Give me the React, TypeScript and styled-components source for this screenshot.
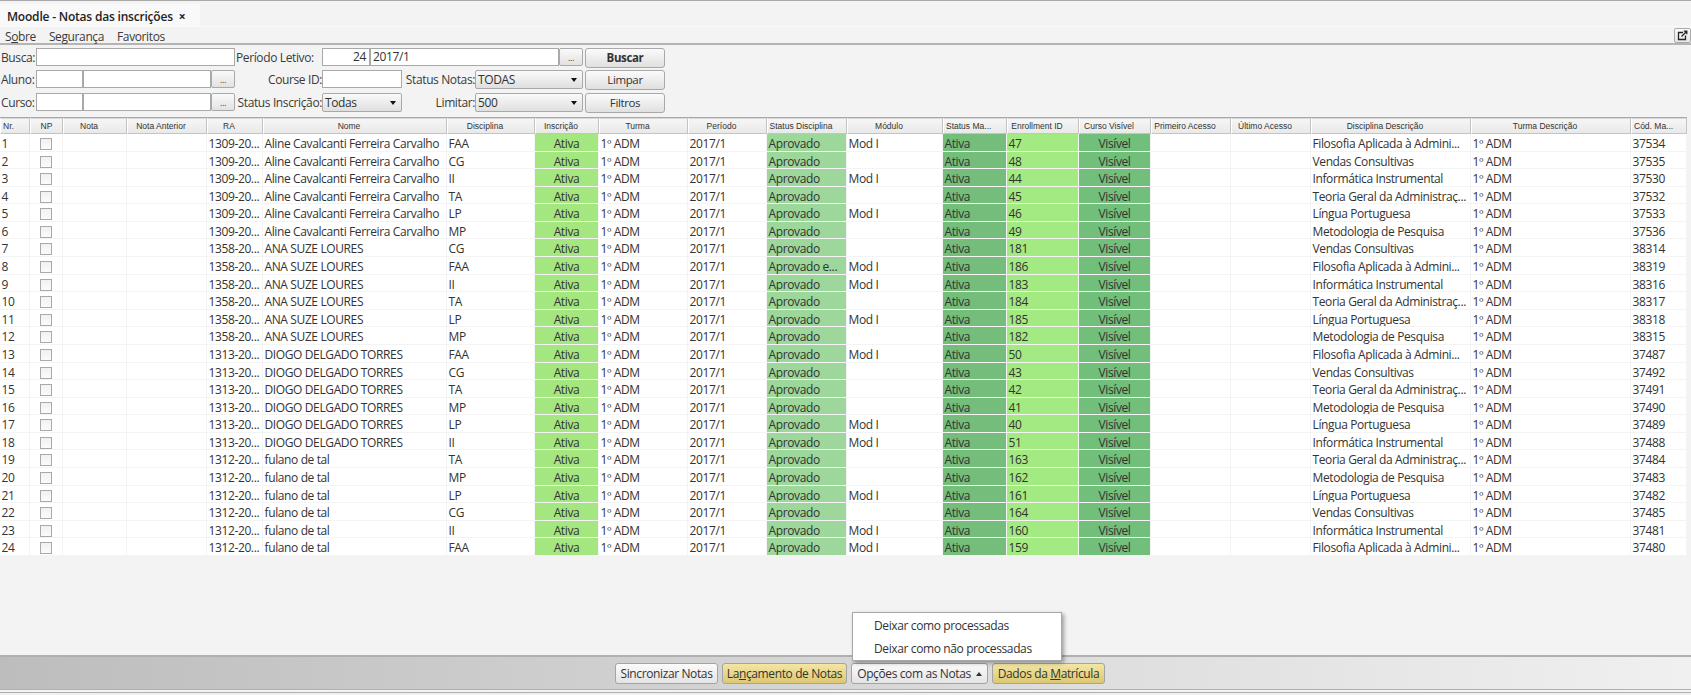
import React from "react";
import styled, { createGlobalStyle } from "styled-components";

const Global = createGlobalStyle`
  html, body { margin: 0; padding: 0; background: #f3f3f3; }
  body { font-family: "Open Sans", "Liberation Sans", sans-serif; color: #333; letter-spacing: -0.38px; }
`;

const COLS = "30px 33px 64px 80px 56px 184px 88px 64px 89px 79px 80px 96px 64px 72px 72px 80px 80px 160px 160px 56px";

const Page = styled.div`
  position: relative;
  width: 1691px;
  height: 695px;
  overflow: hidden;
  display: flex;
  flex-direction: column;
  background: #f3f3f3;
  border-top: 1px solid #a8a8a8;
  box-sizing: border-box;
  font-size: 12px;
`;
const TabBar = styled.div`
  height: 22px;
  padding-top: 3px;
  box-sizing: content-box;
  display: flex;
  border-bottom: 1px solid #fafafa;
`;
const Tab = styled.div`
  width: 200px;
  display: flex;
  align-items: center;
  padding: 3px 0 0 7px;
  box-sizing: border-box;
  background: #f9f9f9;
  font-weight: 600;
  font-size: 12px;
  letter-spacing: -0.2px;
  color: #222;
`;
const TabClose = styled.span`
  margin-left: 6px;
  font-size: 12px;
  font-weight: 700;
`;
const MenuBar = styled.div`
  height: 16px;
  display: flex;
  align-items: flex-start;
  justify-content: space-between;
  border-bottom: 2px solid #b4b4b4;
`;
const MenuItems = styled.div`
  display: flex;
  gap: 13px;
  padding: 1px 0 0 5px;
`;
const MenuItem = styled.span`
  font-size: 12px;
  color: #3a3a3a;
`;
const IconButton = styled.div`
  width: 17px;
  height: 15px;
  margin-top: 1px;
  display: flex;
  align-items: center;
  justify-content: center;
  box-sizing: border-box;
  border: 1px solid #aaa;
  border-radius: 2px;
  background: linear-gradient(#fbfbfb, #e6e6e6);
`;
const Form = styled.div`
  height: 72px;
  box-sizing: border-box;
  padding-top: 3px;
  display: grid;
  grid-template-columns: 36px 47px 128px 24px 87px 48px 32px 73px 84px 24px 2px 80px;
  grid-template-rows: 20px 21px 19px;
  row-gap: 2px;
  align-items: start;
`;
const FieldLabel = styled.div<{ $col: string; $right?: boolean }>`
  grid-column: ${(p) => p.$col};
  height: 18px;
  line-height: 19px;
  padding-left: 1px;
  text-align: ${(p) => (p.$right ? "right" : "left")};
  font-size: 12px;
  color: #3a3a3a;
  white-space: nowrap;
`;
const Field = styled.div<{ $col: string; $right?: boolean }>`
  grid-column: ${(p) => p.$col};
  height: 18px;
  line-height: 16px;
  box-sizing: border-box;
  background: #fff;
  border: 1px solid #a9a9a9;
  padding: 0 3px 0 2px;
  text-align: ${(p) => (p.$right ? "right" : "left")};
  font-size: 12px;
  color: #333;
`;
const Dots = styled.div<{ $col: string }>`
  grid-column: ${(p) => p.$col};
  height: 18px;
  box-sizing: border-box;
  border: 1px solid #a9a9a9;
  border-radius: 2px;
  background: linear-gradient(#fafafa, #e2e2e2);
  font-size: 9px;
  line-height: 18px;
  text-align: center;
  color: #444;
`;
const SelectBox = styled.div<{ $col: string }>`
  grid-column: ${(p) => p.$col};
  height: 19px;
  box-sizing: border-box;
  border: 1px solid #a9a9a9;
  border-radius: 2px;
  background: linear-gradient(#fafafa, #dfdfdf);
  display: flex;
  align-items: center;
  justify-content: space-between;
  padding: 0 5px 0 2px;
  font-size: 12px;
  color: #333;
`;
const Caret = styled.i`
  width: 0;
  height: 0;
  border-left: 3px solid transparent;
  border-right: 3px solid transparent;
  border-top: 4px solid #111;
`;
const FormButton = styled.div<{ $col: string; $bold?: boolean }>`
  grid-column: ${(p) => p.$col};
  height: 20px;
  box-sizing: border-box;
  border: 1px solid #a9a9a9;
  border-radius: 3px;
  background: linear-gradient(#fbfbfb, #e0e0e0);
  font-size: 11.5px;
  line-height: 18px;
  text-align: center;
  font-weight: ${(p) => (p.$bold ? 700 : 400)};
  color: #333;
`;
const TableWrap = styled.div`
  width: 1687px;
  border-top: 1px solid #a8a8a8;
`;
const HeadRow = styled.div`
  display: grid;
  grid-template-columns: ${COLS};
  height: 16px;
`;
const HeadCell = styled.div<{ $align: string }>`
  box-sizing: border-box;
  height: 16px;
  background: linear-gradient(#f6f6f6, #e9e9e9);
  border: 1px solid #c4c4c4;
  border-left-color: #fff;
  border-top-color: #d8d8d8;
  font-family: "Liberation Sans", sans-serif;
  font-size: 8.5px;
  letter-spacing: 0;
  line-height: 14px;
  text-align: ${(p) => (p.$align === "left" ? "left" : "center")};
  padding: ${(p) =>
    p.$align === "left" ? "0 0 0 2px" : p.$align === "shift" ? "0 12px 0 0" : "0"};
  color: #333;
  white-space: nowrap;
  overflow: hidden;
`;
const Rows = styled.div`
  display: grid;
  grid-auto-rows: 17.58px;
`;
const Row = styled.div`
  display: grid;
  grid-template-columns: ${COLS};
  min-height: 0;
  background: #fff;
`;
const toneColor: Record<string, string> = {
  ativa: "#a4e680",
  aprovado: "#9dd79b",
  status: "#74bd7b",
  enroll: "#a4ea82",
  visivel: "#72be7b",
  none: "#fff",
};
const Cell = styled.div<{ $tone?: string; $center?: boolean }>`
  box-sizing: border-box;
  background: ${(p) => toneColor[p.$tone || "none"]};
  border-right: 1px solid #f4f4f4;
  border-bottom: 1px solid #f4f4f4;
  padding-left: ${(p) => (p.$center ? "0" : "1.5px")};
  text-align: ${(p) => (p.$center ? "center" : "left")};
  font-size: 12px;
  line-height: 19px;
  color: #333;
  white-space: nowrap;
  overflow: hidden;
`;
const CheckCell = styled(Cell)`
  display: flex;
  justify-content: center;
  align-items: flex-start;
  padding: 4px 0 0 0;
`;
const CheckBox = styled.span`
  width: 12px;
  height: 12px;
  box-sizing: border-box;
  border: 1px solid #a9a9a9;
  background: linear-gradient(#f1f1f1, #fbfbfb);
`;
const Filler = styled.div`
  flex: 1;
`;
const BottomBar = styled.div`
  height: 32px;
  box-sizing: content-box;
  border-top: 2px solid #b0b0b0;
  border-bottom: 1px solid #b0b0b0;
  background: linear-gradient(90deg, #bdbdbd, #f0f0f0);
  padding-left: 615px;
  display: flex;
  gap: 4px;
  align-items: flex-start;
`;
const ActionButton = styled.div<{ $gold?: boolean; $w: number }>`
  width: ${(p) => p.$w}px;
  height: 21px;
  margin-top: 6px;
  box-sizing: border-box;
  border: 1px solid #a4a4a4;
  border-radius: 3px;
  background: ${(p) =>
    p.$gold ? "linear-gradient(#f3e5a4, #dcc873)" : "linear-gradient(#fbfbfb, #e4e4e4)"};
  display: flex;
  align-items: center;
  justify-content: center;
  gap: 5px;
  font-size: 12px;
  color: #333;
  white-space: nowrap;
`;
const UpCaret = styled.i`
  width: 0;
  height: 0;
  border-left: 3px solid transparent;
  border-right: 3px solid transparent;
  border-bottom: 4px solid #333;
`;
const StatusBar = styled.div`
  height: 2px;
  margin-top: 2px;
  border-top: 1px solid #b0b0b0;
  background: #f0f0f0;
`;
const Popup = styled.div`
  position: absolute;
  left: 852px;
  top: 611px;
  width: 210px;
  height: 49px;
  box-sizing: border-box;
  border: 1px solid #a8a8a8;
  background: #fff;
  box-shadow: 2px 2px 4px rgba(0, 0, 0, 0.35);
  display: flex;
  flex-direction: column;
  justify-content: center;
  gap: 6px;
  padding: 1px 0 0 21px;
`;
const PopupItem = styled.div`
  font-size: 12px;
  line-height: 17px;
  color: #333;
  white-space: nowrap;
`;

const heads: [string, string][] = [
  ["Nr.", "left"], ["NP", "center"], ["Nota", "shift"], ["Nota Anterior", "shift"], ["RA", "shift"], ["Nome", "shift"],
  ["Disciplina", "shift"], ["Inscrição", "shift"], ["Turma", "shift"], ["Período", "shift"], ["Status Disciplina", "shift"],
  ["Módulo", "shift"], ["Status Ma...", "left"], ["Enrollment ID", "shift"], ["Curso Visível", "shift"],
  ["Primeiro Acesso", "shift"], ["Último Acesso", "shift"], ["Disciplina Descrição", "shift"], ["Turma Descrição", "shift"],
  ["Cód. Ma...", "left"],
];

const desc: Record<string, string> = {
  FAA: "Filosofia Aplicada à Admini...",
  CG: "Vendas Consultivas",
  II: "Informática Instrumental",
  TA: "Teoria Geral da Administraç...",
  LP: "Língua Portuguesa",
  MP: "Metodologia de Pesquisa",
};
const withModule = new Set(["FAA", "II", "LP"]);
const ALINE = ["1309-20...", "Aline Cavalcanti Ferreira Carvalho"];
const ANA = ["1358-20...", "ANA SUZE LOURES"];
const DIOGO = ["1313-20...", "DIOGO DELGADO TORRES"];
const FULANO = ["1312-20...", "fulano de tal"];
const data: [string[], string, string, string][] = [
  [ALINE, "FAA", "47", "37534"], [ALINE, "CG", "48", "37535"], [ALINE, "II", "44", "37530"],
  [ALINE, "TA", "45", "37532"], [ALINE, "LP", "46", "37533"], [ALINE, "MP", "49", "37536"],
  [ANA, "CG", "181", "38314"], [ANA, "FAA", "186", "38319"], [ANA, "II", "183", "38316"],
  [ANA, "TA", "184", "38317"], [ANA, "LP", "185", "38318"], [ANA, "MP", "182", "38315"],
  [DIOGO, "FAA", "50", "37487"], [DIOGO, "CG", "43", "37492"], [DIOGO, "TA", "42", "37491"],
  [DIOGO, "MP", "41", "37490"], [DIOGO, "LP", "40", "37489"], [DIOGO, "II", "51", "37488"],
  [FULANO, "TA", "163", "37484"], [FULANO, "MP", "162", "37483"], [FULANO, "LP", "161", "37482"],
  [FULANO, "CG", "164", "37485"], [FULANO, "II", "160", "37481"], [FULANO, "FAA", "159", "37480"],
];

export default function App() {
  return (
    <Page>
      <Global />
      <TabBar>
        <Tab>
          Moodle - Notas das inscrições<TabClose>×</TabClose>
        </Tab>
      </TabBar>
      <MenuBar>
        <MenuItems>
          <MenuItem>
            S<u>o</u>bre
          </MenuItem>
          <MenuItem>Segurança</MenuItem>
          <MenuItem>Favoritos</MenuItem>
        </MenuItems>
        <IconButton>
          <svg width="11" height="11" viewBox="0 0 11 11" fill="none" stroke="#222" strokeWidth="1.3">
            <path d="M6 2.5H1.5v7h7V5.5" />
            <path d="M4.5 6.5 9.5 1.5M6.8 1.2h3v3" />
          </svg>
        </IconButton>
      </MenuBar>
      <Form>
        <FieldLabel $col="1 / 2">Busca:</FieldLabel>
        <Field $col="2 / 5" />
        <FieldLabel $col="5 / 6">Período Letivo:</FieldLabel>
        <Field $col="6 / 7" $right>24</Field>
        <Field $col="7 / 10">2017/1</Field>
        <Dots $col="10 / 11">...</Dots>
        <FormButton $col="12 / 13" $bold>Buscar</FormButton>

        <FieldLabel $col="1 / 2">Aluno:</FieldLabel>
        <Field $col="2 / 3" />
        <Field $col="3 / 4" />
        <Dots $col="4 / 5">...</Dots>
        <FieldLabel $col="5 / 6" $right>Course ID:</FieldLabel>
        <Field $col="6 / 8" />
        <FieldLabel $col="8 / 9" $right>Status Notas:</FieldLabel>
        <SelectBox $col="9 / 11">TODAS<Caret /></SelectBox>
        <FormButton $col="12 / 13">Limpar</FormButton>

        <FieldLabel $col="1 / 2">Curso:</FieldLabel>
        <Field $col="2 / 3" />
        <Field $col="3 / 4" />
        <Dots $col="4 / 5">...</Dots>
        <FieldLabel $col="5 / 6" $right>Status Inscrição:</FieldLabel>
        <SelectBox $col="6 / 8">Todas<Caret /></SelectBox>
        <FieldLabel $col="8 / 9" $right>Limitar:</FieldLabel>
        <SelectBox $col="9 / 11">500<Caret /></SelectBox>
        <FormButton $col="12 / 13">Filtros</FormButton>
      </Form>
      <TableWrap>
        <HeadRow>
          {heads.map(([h, align]) => (
            <HeadCell key={h} $align={align}>{h}</HeadCell>
          ))}
        </HeadRow>
        <Rows>
          {data.map(([who, code, enroll, cod], i) => (
            <Row key={i}>
              <Cell>{i + 1}</Cell>
              <CheckCell><CheckBox /></CheckCell>
              <Cell />
              <Cell />
              <Cell>{who[0]}</Cell>
              <Cell>{who[1]}</Cell>
              <Cell>{code}</Cell>
              <Cell $tone="ativa" $center>Ativa</Cell>
              <Cell>1º ADM</Cell>
              <Cell>2017/1</Cell>
              <Cell $tone="aprovado">{i === 7 ? "Aprovado e..." : "Aprovado"}</Cell>
              <Cell>{withModule.has(code) ? "Mod I" : ""}</Cell>
              <Cell $tone="status">Ativa</Cell>
              <Cell $tone="enroll">{enroll}</Cell>
              <Cell $tone="visivel" $center>Visível</Cell>
              <Cell />
              <Cell />
              <Cell>{desc[code]}</Cell>
              <Cell>1º ADM</Cell>
              <Cell>{cod}</Cell>
            </Row>
          ))}
        </Rows>
      </TableWrap>
      <Filler />
      <BottomBar>
        <ActionButton $w={103}>Sincronizar Notas</ActionButton>
        <ActionButton $w={125} $gold>
          <span>La<u>n</u>çamento de Notas</span>
        </ActionButton>
        <ActionButton $w={137}>
          Opções com as Notas<UpCaret />
        </ActionButton>
        <ActionButton $w={113} $gold>
          <span>Dados da <u>M</u>atrícula</span>
        </ActionButton>
      </BottomBar>
      <StatusBar />
      <Popup>
        <PopupItem>Deixar como processadas</PopupItem>
        <PopupItem>Deixar como não processadas</PopupItem>
      </Popup>
    </Page>
  );
}
